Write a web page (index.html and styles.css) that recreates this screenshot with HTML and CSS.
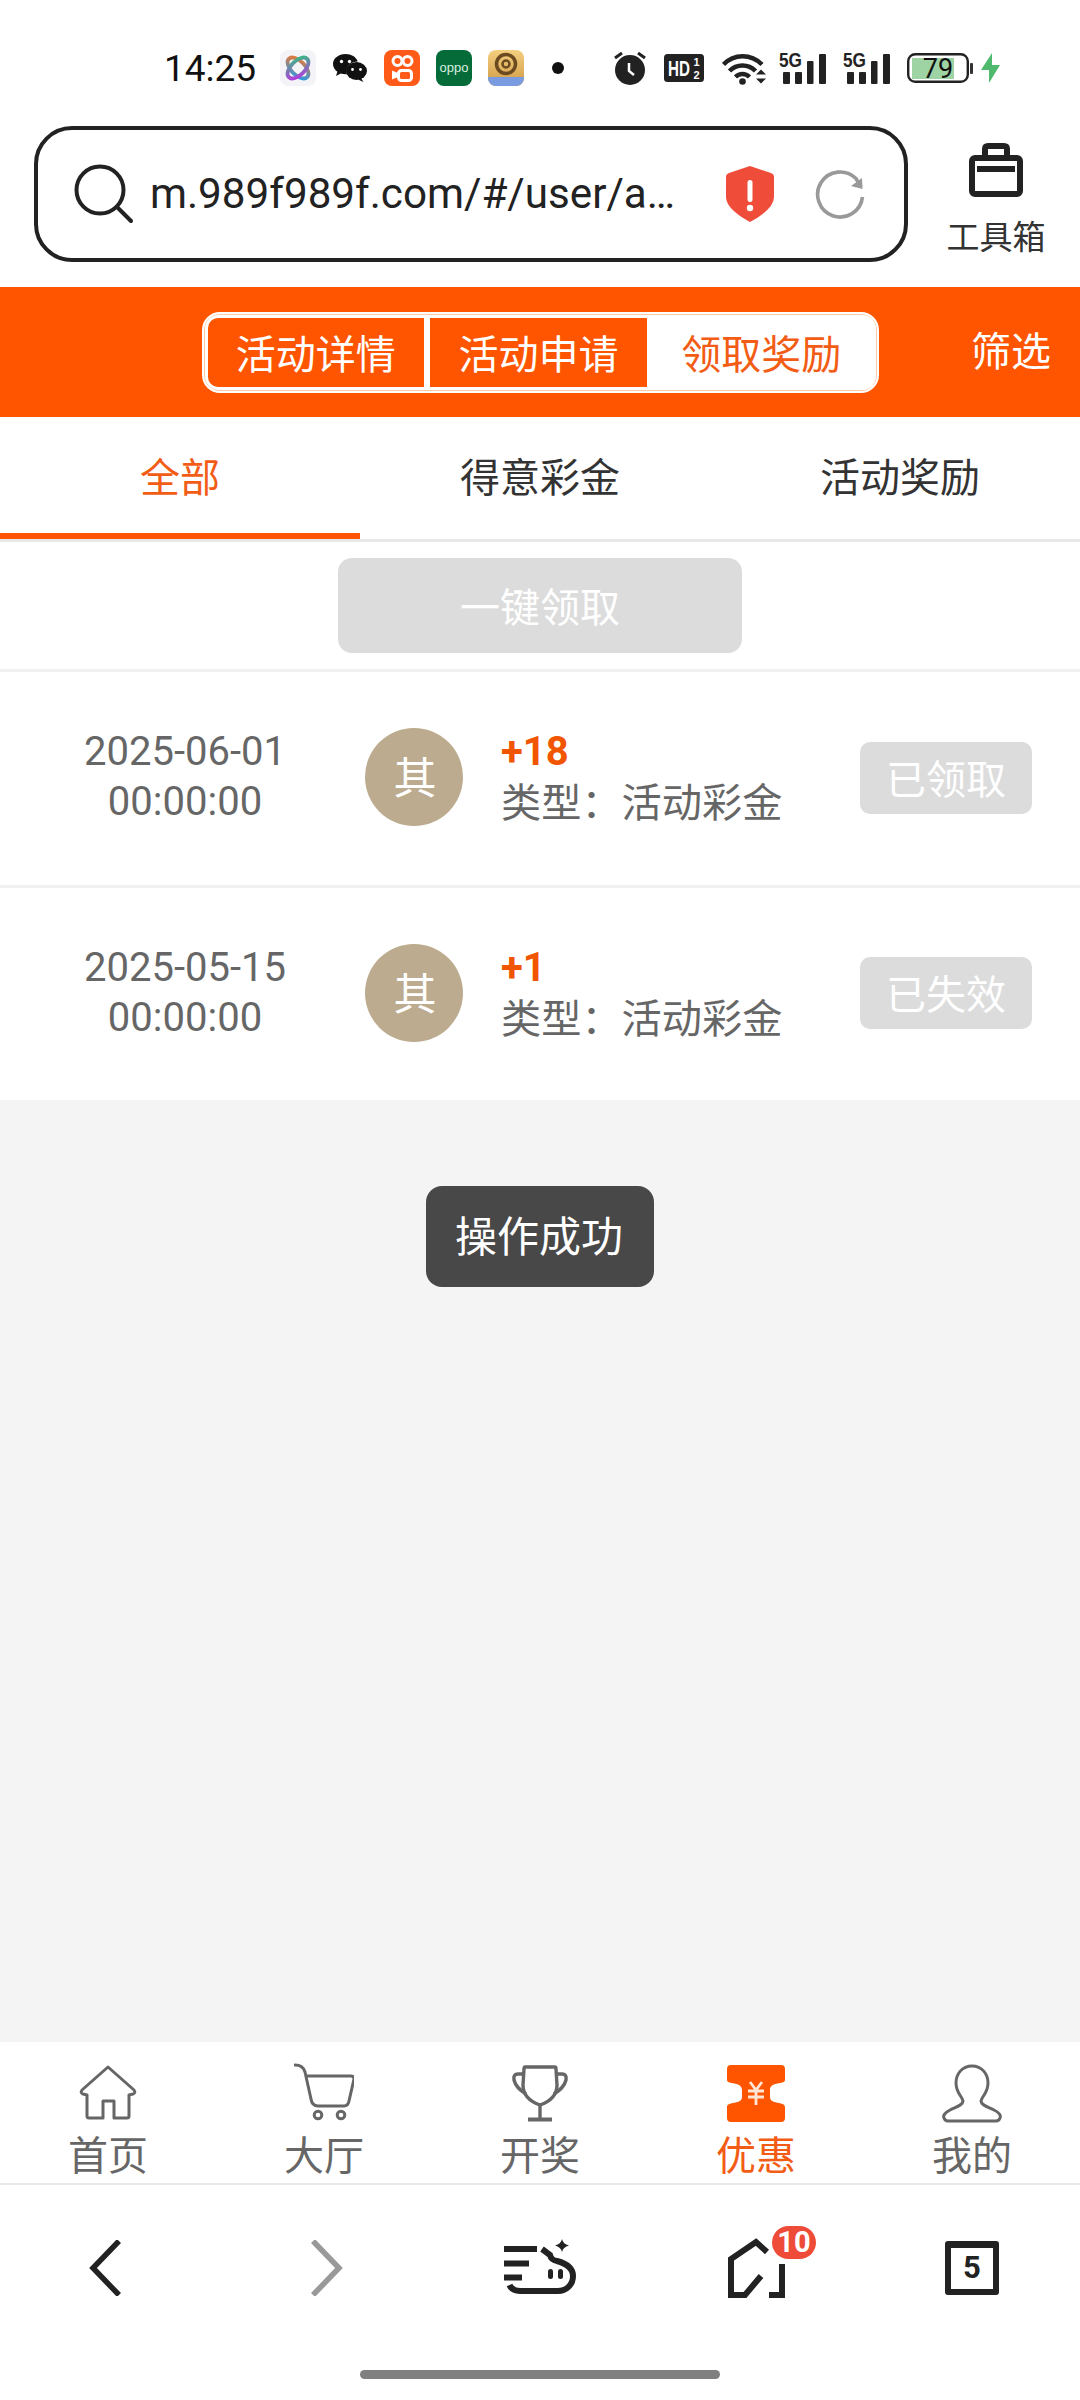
FILE: index.html
```html
<!DOCTYPE html>
<html lang="zh-CN">
<head>
<meta charset="utf-8">
<title>领取奖励</title>
<link rel="stylesheet" href="styles.css">
</head>
<body>
<div class="app">
  <div class="status">
    <span class="time">14:25</span>
    <svg class="si app-tile first" viewBox="0 0 36 36"><defs><linearGradient id="g1" x1="0" y1="0" x2="1" y2="1"><stop offset="0" stop-color="#f7762a"/><stop offset="1" stop-color="#1d9bf0"/></linearGradient><linearGradient id="g2" x1="1" y1="0" x2="0" y2="1"><stop offset="0" stop-color="#2ec27e"/><stop offset="1" stop-color="#c22fe6"/></linearGradient></defs><rect width="36" height="36" rx="8" fill="#f4f4f8"/><ellipse cx="18" cy="18" rx="13" ry="7" transform="rotate(45 18 18)" fill="none" stroke="url(#g1)" stroke-width="3.800"/><ellipse cx="18" cy="18" rx="13" ry="7" transform="rotate(-45 18 18)" fill="none" stroke="url(#g2)" stroke-width="3.800"/></svg>
    <svg class="si wechat" viewBox="0 0 34 28"><path d="M12.500 0C5.600 0 0 4.400 0 10c0 3.100 1.700 5.800 4.400 7.700L3 22l4.700-2.400c1.500.4 3.100.7 4.800.7 .5 0 1 0 1.500-.1-.3-1-.5-2-.5-3 0-5.400 5-9.700 11.200-9.800C23.300 3 18.300 0 12.500 0z" fill="#111"/><ellipse cx="23.500" cy="17" rx="10.500" ry="9" fill="#111"/><path d="M28 24l2.500 4-5.500-2.500z" fill="#111"/><circle cx="8.500" cy="7.500" r="1.700" fill="#fff"/><circle cx="16.500" cy="7.500" r="1.700" fill="#fff"/><circle cx="19.500" cy="15.500" r="1.400" fill="#fff"/><circle cx="27.500" cy="15.500" r="1.400" fill="#fff"/></svg>
    <svg class="si app-tile gap17" viewBox="0 0 36 36"><rect width="36" height="36" rx="8" fill="#ff5a17"/><circle cx="13.500" cy="11" r="4.500" fill="none" stroke="#fff" stroke-width="3"/><circle cx="23.500" cy="11" r="4.500" fill="none" stroke="#fff" stroke-width="3"/><rect x="14.500" y="20.500" width="13" height="10" rx="3" fill="none" stroke="#fff" stroke-width="3"/><path d="M14 23l-6-2.500v9l6-2.500z" fill="#fff"/></svg>
    <svg class="si app-tile gap16" viewBox="0 0 36 36"><rect width="36" height="36" rx="8" fill="#046b39"/><text class="oppo" x="18" y="22" text-anchor="middle">oppo</text></svg>
    <svg class="si app-tile gap16" viewBox="0 0 36 36"><defs><linearGradient id="g3" x1="0" y1="0" x2="0" y2="1"><stop offset="0" stop-color="#f3cf7f"/><stop offset="1" stop-color="#d09a45"/></linearGradient></defs><rect width="36" height="36" rx="8" fill="url(#g3)"/><circle cx="18" cy="14" r="9.500" fill="none" stroke="#6b4a1f" stroke-width="3.500"/><circle cx="18" cy="14" r="3.500" fill="none" stroke="#6b4a1f" stroke-width="2.500"/><path d="M0 27H36V28a8 8 0 0 1-8 8H8a8 8 0 0 1-8-8z" fill="#7b9be0"/></svg>
    <span class="dot"></span>
    <svg class="si alarm" viewBox="0 0 32 33"><circle cx="16" cy="18" r="15" fill="#222"/><path d="M1 6l7-5M31 6l-7-5" stroke="#222" stroke-width="3" fill="none"/><path d="M15 11v8l5 4" stroke="#fff" stroke-width="2.500" fill="none"/></svg>
    <svg class="si hd" viewBox="0 0 40 28"><rect width="40" height="28" rx="3.500" fill="#222"/><text class="hd-t" transform="translate(4 22) scale(.69 1)">HD</text><text class="hd-s" x="32.500" y="11.500" text-anchor="middle">1</text><text class="hd-s" x="32.500" y="25" text-anchor="middle">2</text></svg>
    <svg class="si wifi" viewBox="0 0 44 33"><g fill="none" stroke="#222" stroke-width="4.500"><path d="M1.500 12.500C12 1.500 29 1.500 40 12.500"/><path d="M7.500 19C14.500 11.500 26.500 11.500 33.500 19"/><path d="M13.500 25C17.500 21 23.500 21 27.500 25"/></g><circle cx="20.500" cy="29.500" r="3.300" fill="#222"/><path d="M34 22.500l5-5 5 5zM34 26.500l5 5 5-5z" fill="#222"/></svg>
    <svg class="si sig" viewBox="0 0 47 32"><text class="fiveg" transform="translate(0 15) scale(.82 1)">5G</text><rect x="4" y="20" width="7" height="12" rx="1" fill="#222"/><rect x="16" y="20" width="7" height="12" rx="1" fill="#222"/><rect x="28" y="9" width="6.500" height="23" rx="1" fill="#222"/><rect x="40" y="2" width="7" height="30" rx="1" fill="#222"/></svg>
    <svg class="si sig gap17" viewBox="0 0 47 32"><text class="fiveg" transform="translate(0 15) scale(.82 1)">5G</text><rect x="4" y="20" width="7" height="12" rx="1" fill="#222"/><rect x="16" y="20" width="7" height="12" rx="1" fill="#222"/><rect x="28" y="9" width="6.500" height="23" rx="1" fill="#222"/><rect x="40" y="2" width="7" height="30" rx="1" fill="#222"/></svg>
    <svg class="si battery" viewBox="0 0 67 30"><rect x="1.200" y="1.200" width="59.600" height="27.600" rx="7" fill="none" stroke="#222" stroke-width="2.400"/><rect x="5" y="5" width="42" height="21" fill="#9ed3a4"/><text class="batt" x="31" y="24.500" text-anchor="middle">79</text><rect x="63" y="10" width="3" height="11" rx="1" fill="#333"/></svg>
    <svg class="si bolt" viewBox="0 0 19 30"><path d="M11 0L0 17H8L8 30L19 12H11Z" fill="#4fb96d"/></svg>
  </div>

  <div class="topbar">
    <div class="urlbar">
      <svg class="search" viewBox="0 0 60 60"><circle cx="26" cy="26" r="23.500" fill="none" stroke="#222" stroke-width="4"/><path d="M43 43L57 57" stroke="#222" stroke-width="4" stroke-linecap="round"/></svg>
      <span class="url">m.989f989f.com/#/user/a…</span>
      <svg class="shield" viewBox="0 0 48 56"><path d="M24 0L45 7Q48 8 48 11V31Q48 43 24 56Q0 43 0 31V11Q0 8 3 7Z" fill="#f04c3a"/><rect x="21.500" y="14" width="5" height="22" rx="2.500" fill="#fff"/><circle cx="24" cy="42" r="3.200" fill="#fff"/></svg>
      <svg class="reload" viewBox="0 0 50 50"><path d="M47.500 28A22.500 22.500 0 1 1 41 9.500L46 18" fill="none" stroke="#999" stroke-width="3.600"/><path d="M36 17L47.500 20 47 9z" fill="#999"/></svg>
    </div>
    <div class="toolbox">
      <svg class="tool-ic" viewBox="0 0 54 54"><rect x="3" y="15" width="48" height="36" rx="3" fill="none" stroke="#222" stroke-width="6"/><path d="M16 14V6Q16 3 19 3H35Q38 3 38 6V14" fill="none" stroke="#222" stroke-width="6"/><rect x="8" y="23" width="38" height="6" fill="#222"/></svg>
      <span class="tool-label">工具箱</span>
    </div>
  </div>

  <div class="header">
    <div class="segs">
      <div class="segs-inner">
        <span class="seg seg-first">活动详情</span>
        <span class="seg">活动申请</span>
        <span class="seg seg-on">领取奖励</span>
      </div>
    </div>
    <span class="filter">筛选</span>
  </div>

  <div class="tabs">
    <span class="tab tab-on">全部</span>
    <span class="tab">得意彩金</span>
    <span class="tab">活动奖励</span>
  </div>

  <div class="action"><span class="oneclick">一键领取</span></div>

  <div class="row row-line">
    <div class="date">2025-06-01<br>00:00:00</div>
    <span class="avatar">其</span>
    <div class="info"><b class="amount">+18</b><span class="kind">类型：活动彩金</span></div>
    <span class="state">已领取</span>
  </div>
  <div class="row">
    <div class="date">2025-05-15<br>00:00:00</div>
    <span class="avatar">其</span>
    <div class="info"><b class="amount">+1</b><span class="kind">类型：活动彩金</span></div>
    <span class="state">已失效</span>
  </div>

  <main class="fill"><div class="toast">操作成功</div></main>

  <nav class="nav">
    <div class="nav-item">
      <svg class="nav-ic" viewBox="0 0 60 60"><path d="M30 4L56 27Q58 30 55 31L51 32V53Q51 55 49 55H36V38H25V55H11Q9 55 9 53V32L5 31Q2 30 4 27Z" fill="none" stroke="#666" stroke-width="3" stroke-linejoin="round"/></svg>
      <span>首页</span>
    </div>
    <div class="nav-item">
      <svg class="nav-ic" viewBox="0 0 60 60"><path d="M1 2Q9 2 11 9L17 36Q18 43 24 43H50Q54 43 55 38L60 16Q60 13 57 13H13" fill="none" stroke="#666" stroke-width="3" stroke-linecap="round"/><circle cx="24" cy="52" r="3.800" fill="none" stroke="#666" stroke-width="3"/><circle cx="47" cy="52" r="3.800" fill="none" stroke="#666" stroke-width="3"/></svg>
      <span>大厅</span>
    </div>
    <div class="nav-item">
      <svg class="nav-ic" viewBox="0 0 60 60"><path d="M15 4H45Q46 4 46 6L47 22Q47 36 30 42Q13 36 13 22L14 6Q14 4 15 4Z" fill="none" stroke="#666" stroke-width="3.400"/><path d="M13 11H8Q3 11 4 17Q6 25 16 31M47 11H52Q57 11 56 17Q54 25 44 31" fill="none" stroke="#666" stroke-width="3.400"/><path d="M30 42V56" stroke="#666" stroke-width="3.400"/><path d="M18 56.500H42" stroke="#666" stroke-width="4"/></svg>
      <span>开奖</span>
    </div>
    <div class="nav-item nav-on">
      <svg class="nav-ic" viewBox="0 0 60 60"><path d="M5 2H55Q59 2 59 6V17C59 22 44 18 44 27V34C44 42 59 38 59 44V55Q59 59 55 59H5Q1 59 1 55V44C1 38 16 42 16 34V27C16 18 1 22 1 17V6Q1 2 5 2Z" fill="#ff5500"/><path d="M24 19L30 27L36 19M22 28H38M22 34H38M30 27V42" fill="none" stroke="#ffe6d6" stroke-width="2.800"/></svg>
      <span>优惠</span>
    </div>
    <div class="nav-item">
      <svg class="nav-ic" viewBox="0 0 60 60"><path d="M30 3C20 3 14 11 14 20C14 30 20 33 21 38C21 42 14 44 8 47C2 50 1 53 2 55Q3 58 6 58H54Q57 58 58 55C59 53 58 50 52 47C46 44 39 42 39 38C40 33 46 30 46 20C46 11 40 3 30 3Z" fill="none" stroke="#666" stroke-width="3"/></svg>
      <span>我的</span>
    </div>
  </nav>

  <div class="browser">
    <div class="b-row">
      <div class="b-cell">
        <svg class="chev chev-back" viewBox="0 0 32 56"><path d="M30 1L4 28L30 55" fill="none" stroke="#222" stroke-width="5.500"/></svg>
      </div>
      <div class="b-cell">
        <svg class="chev chev-fwd" viewBox="0 0 32 56"><path d="M2 1L28 28L2 55" fill="none" stroke="#999" stroke-width="5.500"/></svg>
      </div>
      <div class="b-cell">
        <svg class="menu-ic" viewBox="0 0 72 57"><path d="M0 10H33M0 24.500H25M0 38.500H18" stroke="#222" stroke-width="6" fill="none"/><path d="M38 10L46 16Q47 21 53 22C64 25 69 30 69 37C69 46 62 52 54 52H16Q8 52 5.500 46" fill="none" stroke="#222" stroke-width="6"/><rect x="44" y="30" width="5" height="10" rx="2.500" fill="#222"/><rect x="54" y="30" width="5" height="10" rx="2.500" fill="#222"/><path d="M58 0Q59 5 65 6.500Q59 8 58 13Q57 8 51 6.500Q57 5 58 0Z" fill="#222"/></svg>
      </div>
      <div class="b-cell">
        <div class="home-wrap">
          <svg class="home-ic" viewBox="0 0 58 60"><path d="M40 14L29 4L4 21V57H18L34 38" fill="none" stroke="#222" stroke-width="6"/><path d="M55 26V57H42" fill="none" stroke="#222" stroke-width="6"/></svg>
          <span class="badge">10</span>
        </div>
      </div>
      <div class="b-cell"><span class="count">5</span></div>
    </div>
    <div class="indicator"></div>
  </div>
</div>
</body>
</html>
```

FILE: styles.css
```css
* { box-sizing: border-box; }
html, body { margin: 0; padding: 0; background: #fff; }
body { font-family: "Noto Sans CJK SC", Roboto, sans-serif; color: #333; }
.app { width: 1080px; height: 2400px; display: flex; flex-direction: column; overflow: hidden; }

/* status bar */
.status { height: 110px; padding: 26px 0 0 164px; display: flex; align-items: center; flex: none; }
.time { font: 400 37px/1 Roboto, sans-serif; color: #111; width: 92px; white-space: nowrap; }
.si { display: block; flex: none; }
.app-tile { width: 36px; height: 36px; }
.first { margin-left: 24px; }
.wechat { width: 34px; height: 28px; margin-left: 17px; }
.gap17 { margin-left: 17px; }
.gap16 { margin-left: 16px; }
.dot { width: 12px; height: 12px; border-radius: 50%; background: #111; margin-left: 28px; flex: none; }
.alarm { width: 32px; height: 33px; margin-left: 50px; }
.hd { width: 40px; height: 28px; margin-left: 18px; }
.wifi { width: 44px; height: 33px; margin-left: 18px; }
.sig { width: 47px; height: 32px; margin-left: 13px; overflow: visible; }
.sig.gap17 { margin-left: 17px; }
.battery { width: 67px; height: 30px; margin-left: 17px; }
.bolt { width: 19px; height: 30px; margin-left: 7px; }
.oppo { font: 400 13px "Liberation Sans", sans-serif; fill: #d8f0e0; }
.hd-t { font: 700 22px "Liberation Sans", sans-serif; fill: #fff; }
.hd-s { font: 700 11px "Liberation Sans", sans-serif; fill: #fff; }
.fiveg { font: 700 21px "Liberation Sans", sans-serif; fill: #222; }
.batt { font: 400 27px Roboto, sans-serif; fill: #111; }

/* address bar */
.topbar { height: 177px; padding: 16px 0 0 34px; display: flex; flex: none; background: #fff; }
.urlbar { width: 874px; height: 136px; border: 4px solid #222; border-radius: 38px; display: flex; align-items: center; padding: 0 39px 0 36px; flex: none; }
.search { width: 60px; height: 60px; flex: none; }
.url { font: 400 42.200px/1 Roboto, sans-serif; color: #222; margin-left: 16px; white-space: nowrap; }
.shield { width: 48px; height: 56px; flex: none; margin-left: auto; }
.reload { width: 50px; height: 50px; flex: none; margin-left: 41px; }
.toolbox { flex: 1; display: flex; flex-direction: column; align-items: center; padding: 17px 0 0 4px; }
.tool-ic { width: 54px; height: 54px; display: block; }
.tool-label { font-size: 33px; line-height: 46px; margin-top: 15px; color: #333; }

/* orange header */
.header { height: 130px; background: #ff5500; display: grid; grid-template-columns: 1fr auto 1fr; align-items: center; flex: none; }
.segs { grid-column: 2; width: 677px; height: 81px; border: 2px solid #fff; border-radius: 18px; padding: 1px; background: #ffc9a8; }
.segs-inner { height: 100%; display: flex; gap: 6px; padding: 3px; background: #fff; border-radius: 14px; }
.seg { flex: 1; display: flex; align-items: center; justify-content: center; background: #ff5500; color: #fff; font-size: 40px; line-height: 1; }
.seg-first { border-radius: 10px 0 0 10px; }
.seg-on { background: #fff; color: #f25c14; padding-right: 3px; }
.filter { grid-column: 3; justify-self: end; color: #fff; font-size: 40px; line-height: 1; padding: 0 29px 6px 0; }

/* tabs */
.tabs { height: 125px; display: grid; grid-template-columns: repeat(3, 1fr); border-bottom: 3px solid #e8e8e8; flex: none; }
.tab { display: flex; align-items: center; justify-content: center; font-size: 40px; line-height: 1; color: #333; border-bottom: 6px solid transparent; }
.tab-on { color: #f25c14; border-bottom-color: #ff5500; }

/* one-click */
.action { height: 130px; border-bottom: 3px solid #f1f1f1; display: flex; align-items: center; justify-content: center; flex: none; }
.oneclick { width: 404px; height: 95px; border-radius: 14px; background: #dcdcdc; color: #fff; font-size: 40px; line-height: 1; display: flex; align-items: center; justify-content: center; padding-bottom: 2px; }

/* records */
.row { height: 212px; display: flex; align-items: center; padding-bottom: 3px; flex: none; background: #fff; }
.row-line { height: 216px; border-bottom: 3px solid #f1f1f1; }
.date { width: 365px; padding-left: 5px; text-align: center; font: 400 40px/50px Roboto, sans-serif; color: #666; flex: none; }
.avatar { width: 98px; height: 98px; border-radius: 50%; background: #bcab8f; color: #fff; font-size: 43px; line-height: 1; display: flex; align-items: center; justify-content: center; flex: none; padding: 0 0 3px 2px; }
.info { margin-left: 38px; padding-bottom: 3px; display: flex; flex-direction: column; flex: 1; }
.amount { font: 700 40px/48px Roboto, sans-serif; color: #f25500; }
.kind { font-size: 40.200px; line-height: 47px; color: #666; }
.state { width: 172px; height: 72px; margin-top: 1px; border-radius: 10px; background: #dcdcdc; color: #fff; font-size: 40px; line-height: 1; display: flex; align-items: center; justify-content: center; flex: none; margin-right: 48px; padding-bottom: 2px; }

/* grey area */
.fill { flex: 1; background: #f4f4f4; position: relative; }
.toast { position: absolute; left: 426px; top: 86px; width: 228px; height: 101px; border-radius: 16px; background: #484848; color: #fff; font-size: 42px; line-height: 1; display: flex; align-items: center; justify-content: center; padding: 0 2px 6px 0; }

/* site nav */
.nav { height: 143px; display: grid; grid-template-columns: repeat(5, 1fr); border-bottom: 2px solid #e9e9e9; flex: none; background: #fff; }
.nav-item { display: flex; flex-direction: column; align-items: center; padding-top: 21px; color: #666; font-size: 40px; line-height: 50px; }
.nav-ic { width: 60px; height: 60px; display: block; margin-bottom: 5px; }
.nav-on { color: #f25c14; }

/* browser bar */
.browser { height: 215px; flex: none; display: flex; flex-direction: column; align-items: center; background: #fff; }
.b-row { width: 100%; height: 185px; display: grid; grid-template-columns: repeat(5, 1fr); align-items: center; padding-bottom: 20px; }
.b-cell { display: flex; justify-content: center; align-items: center; }
.chev { width: 32px; height: 56px; display: block; }
.chev-back { margin-right: 6px; }
.chev-fwd { margin-left: 6px; }
.menu-ic { width: 72px; height: 57px; display: block; }
.home-wrap { position: relative; width: 58px; height: 60px; }
.home-ic { width: 58px; height: 60px; display: block; }
.badge { position: absolute; left: 45px; top: -12px; width: 44px; height: 33px; border-radius: 17px; background: #ee4b38; color: #fff; font: 700 29px/33px Roboto, sans-serif; text-align: center; }
.count { width: 54px; height: 54px; border: 6px solid #222; border-top-width: 7px; border-radius: 3px; font: 700 31px/40px Roboto, sans-serif; color: #222; text-align: center; }
.indicator { width: 360px; height: 9px; border-radius: 5px; background: #808080; flex: none; }
```
